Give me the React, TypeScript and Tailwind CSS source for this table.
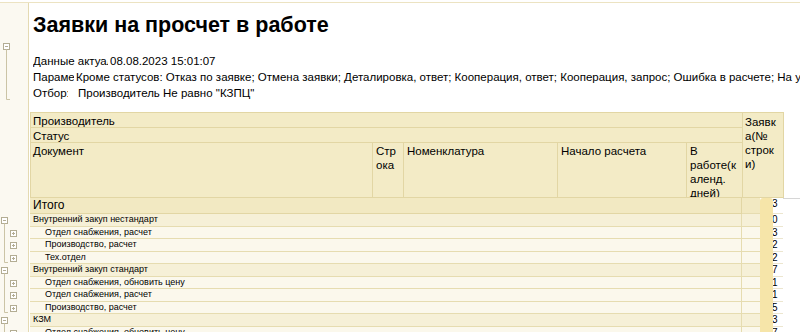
import React from 'react';

type Row = { label: string; value: string; kind: 'group' | 'child' | 'last' };

const rows: Row[] = [
  { label: 'Внутренний закуп нестандарт', value: '0', kind: 'group' },
  { label: 'Отдел снабжения, расчет', value: '3', kind: 'child' },
  { label: 'Производство, расчет', value: '2', kind: 'child' },
  { label: 'Тех.отдел', value: '2', kind: 'last' },
  { label: 'Внутренний закуп стандарт', value: '7', kind: 'group' },
  { label: 'Отдел снабжения, обновить цену', value: '1', kind: 'child' },
  { label: 'Отдел снабжения, расчет', value: '1', kind: 'child' },
  { label: 'Производство, расчет', value: '5', kind: 'last' },
  { label: 'КЗМ', value: '3', kind: 'group' },
  { label: 'Отдел снабжения, обновить цену', value: '7', kind: 'child' },
];

const BOX = '#b3ad93';
const LINE = '#cbc4a6';

// tree marks in the left gutter (⊟ / ⊞ and connecting lines)
const TreeMark: React.FC<{ kind: Row['kind'] }> = ({ kind }) => (
  <svg width="28" height="13" className="block overflow-visible">
    {kind === 'group' ? (
      <>
        <rect x="1.5" y="3.5" width="6" height="6" fill="#fff" stroke={BOX} />
        <line x1="3" x2="6" y1="6.5" y2="6.5" stroke={BOX} />
        <line x1="4.5" x2="4.5" y1="9.5" y2="13" stroke={LINE} />
      </>
    ) : (
      <>
        <line x1="4.5" x2="4.5" y1="0" y2={kind === 'last' ? 10.5 : 13} stroke={LINE} />
        {kind === 'last' && <line x1="4.5" x2="8" y1="10.5" y2="10.5" stroke={LINE} />}
        <rect x="10.5" y="3.5" width="6" height="6" fill="#fff" stroke={BOX} />
        <line x1="12" x2="15" y1="6.5" y2="6.5" stroke={BOX} />
        <line x1="13.5" x2="13.5" y1="5" y2="8" stroke={BOX} />
      </>
    )}
  </svg>
);

const Gutter: React.FC<{ children?: React.ReactNode; className?: string }> = ({ children, className = '' }) => (
  <div className={`w-[29px] shrink-0 border-r border-[#e4dab2] bg-[#fbf9f1] ${className}`}>{children}</div>
);

const ValueCell: React.FC<{ value: string; bg: string; top?: boolean }> = ({ value, bg, top }) => (
  <div className="flex w-[41px] shrink-0">
    <div className={`w-[18px] border-b border-[#e6dcb0] ${bg}`} />
    <div className={`w-[13px] bg-[#f6e5a9] ${top ? 'rounded-t-[3px]' : ''}`} />
    <div className="w-[10px] overflow-hidden border-b border-[#ece6cf] bg-white text-[10px] leading-[12px] text-black">
      <span className="-ml-[1px] block">{value}</span>
    </div>
  </div>
);

const cell = 'border-r border-b border-[#e2d6a4] overflow-hidden';

const App: React.FC = () => {
  return (
    <div className="h-[332px] w-[800px] overflow-hidden bg-white pt-[2px] font-['Liberation_Sans',Arial,sans-serif] text-black">
      <div className="flex h-full flex-col border-t border-[#ece3c2]">
        {/* Title */}
        <div className="flex h-[38px] shrink-0">
          <Gutter />
          <h1 className="pl-[4px] pt-[10px] text-[21.5px] font-bold leading-[24px]">Заявки на просчет в работе</h1>
        </div>

        {/* Report info */}
        <div className="flex h-[63px] shrink-0">
          <Gutter className="flex flex-col pl-[3px] pt-[2px]">
            <svg width="20" height="60" className="block">
              <rect x="0.5" y="0.5" width="6" height="6" fill="#fff" stroke={BOX} />
              <line x1="2" x2="5" y1="3.5" y2="3.5" stroke={BOX} />
              <line x1="3.5" x2="3.5" y1="6.5" y2="56.5" stroke={LINE} />
              <line x1="3.5" x2="7" y1="56.5" y2="56.5" stroke={LINE} />
            </svg>
          </Gutter>
          <div className="flex flex-col whitespace-nowrap pl-[4px] pt-[12px] text-[11.5px] leading-[16px]">
            <div className="flex">
              <span className="w-[75px] overflow-hidden">Данные актуальны:</span>
              <span className="pl-[2px]">08.08.2023 15:01:07</span>
            </div>
            <div className="flex">
              <span className="w-[41px] overflow-hidden">Параметры:</span>
              <span className="pl-[2px]">
                Кроме статусов: Отказ по заявке; Отмена заявки; Деталировка, ответ; Кооперация, ответ; Кооперация, запрос; Ошибка в расчете; На уточнении
              </span>
            </div>
            <div className="flex">
              <span className="w-[35px] overflow-hidden">Отбор:</span>
              <span className="pl-[10px]">Производитель Не равно "КЗПЦ"</span>
            </div>
          </div>
        </div>

        {/* Spacer */}
        <div className="flex h-[8px] shrink-0">
          <Gutter />
        </div>

        {/* Column header */}
        <div className="flex shrink-0">
          <Gutter />
          <div className="ml-[1px] grid w-[754px] shrink-0 grid-cols-[342px_31px_154px_129px_56px_41px] grid-rows-[15px_15px_55px] border-t border-l border-[#e2d6a4] bg-[#f3ebc6] text-[11.5px] leading-[14px]">
            <div className={`col-span-5 col-start-1 row-start-1 pl-[2px] pt-[1px] ${cell}`}>Производитель</div>
            <div className={`col-start-6 row-span-3 row-start-1 pl-[2px] pt-[2px] ${cell}`}>
              Заявк
              <br />
              а(№
              <br />
              строк
              <br />и)
            </div>
            <div className={`col-span-5 col-start-1 row-start-2 pl-[2px] pt-[1px] ${cell}`}>Статус</div>
            <div className={`col-start-1 row-start-3 pl-[2px] pt-[1px] ${cell}`}>Документ</div>
            <div className={`col-start-2 row-start-3 pl-[3px] pt-[1px] ${cell}`}>
              Стр
              <br />
              ока
            </div>
            <div className={`col-start-3 row-start-3 pl-[3px] pt-[1px] ${cell}`}>Номенклатура</div>
            <div className={`col-start-4 row-start-3 pl-[3px] pt-[1px] ${cell}`}>Начало расчета</div>
            <div className={`col-start-5 row-start-3 pl-[3px] pt-[1px] ${cell}`}>
              В
              <br />
              работе(к
              <br />
              аленд.
              <br />
              дней)
            </div>
          </div>
        </div>

        {/* Total row */}
        <div className="flex h-[16px] shrink-0">
          <Gutter />
          <div className="ml-[1px] w-[712px] shrink-0 border-r border-b border-[#e2d6a4] bg-[#f2e9c2] pl-[3px] text-[12px] leading-[15px]">
            Итого
          </div>
          <ValueCell value="3" bg="bg-[#f2e9c2]" top />
          <div className="flex-1 border-t border-[#d6d6d6]" />
        </div>

        {/* Data rows */}
        {rows.map((r, i) => {
          const bg = r.kind === 'group' ? 'bg-[#f6f0d7]' : 'bg-[#fbf8ec]';
          return (
            <div key={i} className="flex h-[12.5px] shrink-0">
              <Gutter className="overflow-visible">
                <TreeMark kind={r.kind} />
              </Gutter>
              <div
                className={`ml-[1px] w-[712px] shrink-0 overflow-hidden whitespace-nowrap border-r border-b border-[#e6dcb0] text-[9px] leading-[11.5px] ${bg} ${
                  r.kind === 'group' ? 'pl-[3px]' : 'pl-[15px]'
                }`}
              >
                {r.label}
              </div>
              <ValueCell value={r.value} bg={bg} />
            </div>
          );
        })}
        <div className="flex flex-1">
          <Gutter />
        </div>
      </div>
    </div>
  );
};

export default App;
